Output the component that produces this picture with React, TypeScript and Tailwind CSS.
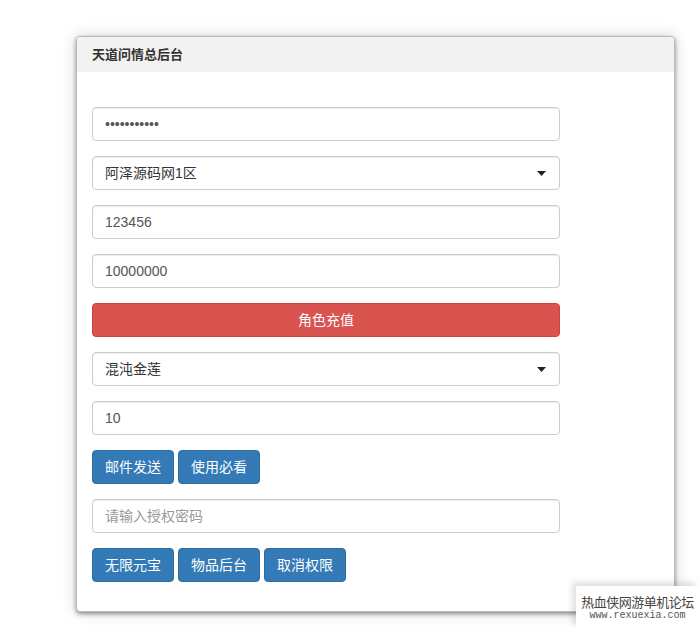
import React from 'react'

const font = { fontFamily: '"Liberation Sans", "Noto Sans CJK SC", sans-serif' }

function Field({ value, placeholder, type = 'text' }: { value?: string; placeholder?: string; type?: string }) {
  return (
    <input
      type={type}
      defaultValue={value}
      placeholder={placeholder}
      className="block h-[34px] w-[468px] rounded border border-[#ccc] bg-white px-3 text-[14px] text-[#555] placeholder:text-[#999] shadow-[inset_0_1px_1px_rgba(0,0,0,0.075)] outline-none"
    />
  )
}

function Select({ value }: { value: string }) {
  return (
    <div className="flex h-[34px] w-[468px] items-center justify-between rounded border border-[#ccc] bg-white pl-3 pr-[13px] text-[14px] text-[#333] shadow-[inset_0_1px_1px_rgba(0,0,0,0.075)]">
      <span>{value}</span>
      <svg width="9" height="5" viewBox="0 0 9 5">
        <path d="M0 0h9L4.5 5z" fill="#222" />
      </svg>
    </div>
  )
}

function Btn({ children }: { children: React.ReactNode }) {
  return (
    <button className="h-[34px] rounded border border-[#2e6da4] bg-[#337ab7] px-3 text-[14px] text-white">
      {children}
    </button>
  )
}

export default function App() {
  return (
    <div className="relative h-[629px] w-[699px] overflow-hidden bg-white pl-[76px] pt-[36px]" style={font}>
      <div className="w-[599px] overflow-hidden rounded border border-[#bbb] bg-white shadow-[0_2px_4px_rgba(0,0,0,0.4),0_0_16px_rgba(0,0,0,0.16)]">
        {/* header */}
        <div className="flex h-[35px] items-center bg-[#f2f2f2] px-[15px] text-[13px] font-bold text-[#333]">天道问情总后台</div>
        {/* form */}
        <div className="flex flex-col gap-[15px] px-[15px] pb-[29px] pt-[35px]">
          <Field type="password" value="12345678901" />
          <Select value="阿泽源码网1区" />
          <Field value="123456" />
          <Field value="10000000" />
          <button className="h-[34px] w-[468px] rounded border border-[#d43f3a] bg-[#d9534f] text-[14px] text-white">角色充值</button>
          <Select value="混沌金莲" />
          <Field value="10" />
          <div className="flex gap-1">
            <Btn>邮件发送</Btn>
            <Btn>使用必看</Btn>
          </div>
          <Field placeholder="请输入授权密码" />
          <div className="flex gap-1">
            <Btn>无限元宝</Btn>
            <Btn>物品后台</Btn>
            <Btn>取消权限</Btn>
          </div>
        </div>
      </div>

      {/* watermark */}
      <div className="absolute bottom-0 right-0 flex h-[43px] w-[123px] flex-col items-center justify-center bg-white leading-none shadow-[-4px_-4px_6px_rgba(0,0,0,0.12)]">
        <span className="text-[13px] tracking-[-0.5px] text-[#444]" style={{ fontFamily: '"Noto Sans CJK SC", sans-serif' }}>热血侠网游单机论坛</span>
        <span className="mt-[3px] text-[10px] text-[#555]" style={{ fontFamily: '"Liberation Mono", monospace' }}>www.rexuexia.com</span>
      </div>
    </div>
  )
}
